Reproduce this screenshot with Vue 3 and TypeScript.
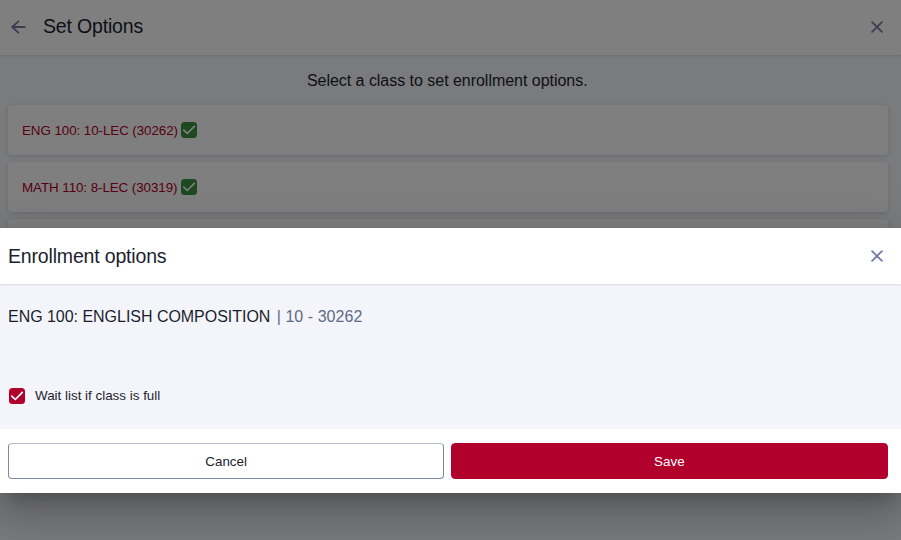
<script setup lang="ts">
import { ref } from 'vue'

interface ClassItem {
  label: string
}

const classes: ClassItem[] = [
  { label: 'ENG 100: 10-LEC (30262)' },
  { label: 'MATH 110: 8-LEC (30319)' },
]
const waitList = ref<boolean>(true)
</script>

<template>
  <div class="screen">
    <header class="bar page-bar">
      <svg class="back" viewBox="0 0 16 14" aria-hidden="true">
        <path d="M8.4 1.4 2.2 7l6.2 5.6M2.4 7h12.3" />
      </svg>
      <h1>Set Options</h1>
      <svg class="close" viewBox="0 0 14 14" aria-hidden="true"><path d="m2.1 2.1 9.8 9.8m0-9.8-9.8 9.8" /></svg>
    </header>
    <main class="page">
      <p class="hint">Select a class to set enrollment options.</p>
      <div class="cards">
        <a v-for="item in classes" :key="item.label" class="card">
          <span class="label">{{ item.label }}</span>
          <span class="check green"><svg viewBox="0 0 16 16"><path d="m2.8 8.1 3.5 3.4 7-7.2" /></svg></span>
        </a>
        <div class="card"></div>
      </div>
    </main>

    <div class="overlay">
      <section class="dialog" role="dialog">
        <header class="bar dialog-bar">
          <h2>Enrollment options</h2>
          <svg class="close" viewBox="0 0 14 14" aria-hidden="true"><path d="m2.1 2.1 9.8 9.8m0-9.8-9.8 9.8" /></svg>
        </header>
        <div class="body">
          <p class="course">ENG 100: ENGLISH COMPOSITION <span class="section">| 10 - 30262</span></p>
          <div class="option" @click="waitList = !waitList">
            <span class="check red"><svg v-if="waitList" viewBox="0 0 16 16"><path d="m2.8 8.1 3.5 3.4 7-7.2" /></svg></span>
            <span class="option-label">Wait list if class is full</span>
          </div>
        </div>
        <footer class="actions">
          <button class="btn cancel" type="button">Cancel</button>
          <button class="btn save" type="button">Save</button>
        </footer>
      </section>
    </div>
  </div>
</template>

<style>
body {
  overflow: hidden;
}
</style>

<style scoped>
.screen {
  position: relative;
  height: 540px;
  overflow: hidden;
  background: #f4f6fa;
  color: #1c1e2e;
  font-family: "Liberation Sans", Arial, sans-serif;
  font-size: 13.4px;
}
h1,
h2,
p {
  margin: 0;
  font-weight: 400;
}
h1,
h2 {
  font-size: 19.5px;
  line-height: 24px;
  letter-spacing: -0.17px;
}
.bar {
  position: relative;
  display: flex;
  align-items: center;
  box-sizing: border-box;
  padding-right: 17px;
  background: #fff;
  box-shadow: 0 1px 2px rgba(30, 35, 60, 0.14);
}
.page-bar {
  height: 55px;
  padding-bottom: 2px;
  padding-left: 10px;
}
.page-bar h1 {
  padding-bottom: 1px;
}
.back {
  width: 16px;
  height: 14px;
  margin-right: 17px;
}
.back,
.close {
  fill: none;
  stroke: #737ba5;
  stroke-width: 1.8;
  stroke-linecap: round;
  stroke-linejoin: round;
}
.close {
  width: 14px;
  height: 14px;
  margin-left: auto;
}
.page {
  padding: 16px 13.5px 0 8px;
}
.hint {
  padding-right: 1px;
  font-size: 16px;
  line-height: 20px;
  letter-spacing: -0.03px;
  text-align: center;
}
.cards {
  display: flex;
  flex-direction: column;
  gap: 7px;
  padding-top: 14px;
}
.card {
  display: flex;
  align-items: center;
  box-sizing: border-box;
  height: 50px;
  padding-left: 14px;
  border-radius: 4px;
  background: #fff;
  box-shadow: 0 1px 4px rgba(30, 35, 60, 0.16);
  color: #b0002b;
}
.label {
  width: 159px;
  letter-spacing: -0.08px;
  white-space: nowrap;
}
.check {
  display: block;
  width: 16px;
  height: 16px;
  border-radius: 3.5px;
}
.check svg {
  display: block;
  fill: none;
  stroke: #fff;
  stroke-width: 1.7;
  stroke-linecap: round;
  stroke-linejoin: round;
}
.green {
  background: #3c9040;
}
.red {
  background: #b0002b;
}
.overlay {
  position: absolute;
  inset: 0;
  display: flex;
  flex-direction: column;
  justify-content: flex-end;
  padding-bottom: 47px;
  background: rgba(0, 0, 0, 0.5);
}
.dialog {
  background: #fff;
  box-shadow:
    0 11px 15px -7px rgba(0, 0, 0, 0.2),
    0 24px 38px 3px rgba(0, 0, 0, 0.14),
    0 9px 46px 8px rgba(0, 0, 0, 0.12);
}
.dialog-bar {
  height: 56px;
  padding-left: 8px;
}
.body {
  box-sizing: border-box;
  height: 145px;
  padding: 23px 8px 0;
  background: #f4f5fa;
}
.course {
  font-size: 16px;
  line-height: 20px;
  letter-spacing: -0.03px;
}
.section {
  margin-left: 2px;
  color: #626985;
  letter-spacing: 0.04px;
}
.option {
  display: flex;
  align-items: center;
  gap: 10px;
  height: 16px;
  margin: 61px 0 0 1px;
}
.option-label {
  padding-bottom: 2px;
}
.actions {
  display: flex;
  gap: 7px;
  padding: 14px 13.5px 14px 8px;
}
.btn {
  flex: 1 1 0;
  box-sizing: border-box;
  height: 36px;
  padding: 0;
  border: 1px solid #7e8aa2;
  border-radius: 4px;
  font: inherit;
}
.cancel {
  border-top-color: #b6bac9;
  background: #fff;
  color: #1c1e2e;
}
.save {
  border-color: #b0002b;
  background: #b0002b;
  color: #fff;
}
</style>
